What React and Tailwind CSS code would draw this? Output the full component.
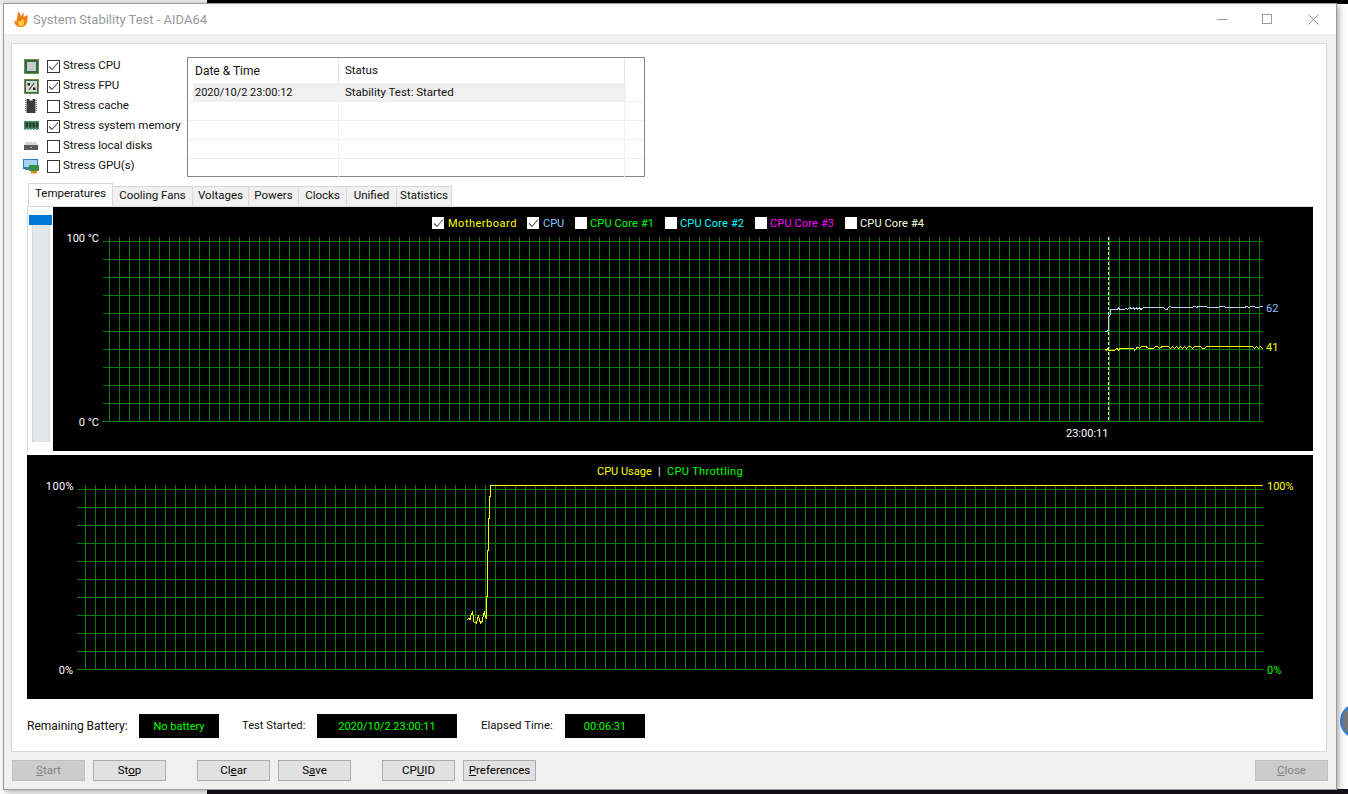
const zoomed = (points, ox, oy, scale = 3) =>
  points.map(([x, y]) => `${ox + x / scale},${oy + y / scale}`).join(' ')

const CPU_TRACE = [[195,333],[203,333],[206,328],[207,290],[210,285],[211,268],[232,268],[236,263],[240,268],[254,268],[258,264],[263,268],[268,262],[275,266],[280,264],[285,268],[288,263],[293,268],[298,263],[303,268],[312,262],[370,262],[376,268],[382,268],[388,259],[395,262],[458,262],[463,259],[470,262],[478,259],[498,260],[503,262],[536,262],[540,259],[552,260],[556,262],[615,262],[620,259],[627,262],[637,259],[650,262],[668,260]]
const BOARD_TRACE = [[195,388],[199,391],[203,386],[207,392],[225,391],[230,385],[236,391],[240,385],[280,385],[284,391],[292,382],[298,385],[304,380],[318,380],[326,385],[340,385],[346,380],[352,380],[358,385],[366,380],[386,380],[392,385],[397,380],[403,385],[409,380],[415,385],[421,380],[427,385],[433,380],[439,385],[445,380],[451,380],[458,385],[464,380],[482,380],[488,385],[495,385],[499,380],[638,380],[644,385],[650,380],[656,385],[662,380],[668,385]]
const USAGE_TRACE = [[81,478],[87,475],[90,481],[93,464],[97,458],[99,466],[102,487],[110,490],[112,476],[115,469],[119,478],[121,490],[127,484],[130,465],[133,458],[136,470],[139,476],[139,408],[142,408],[142,272],[145,272],[145,175],[148,175],[148,108],[151,108],[151,76]]

const range = (start, end, step) => {
  const out = []
  for (let v = start; v <= end; v += step) out.push(v)
  return out
}

function Grid({ left, right, top, rowTop, bottom, firstCol, lastCol }) {
  return (
    <g stroke="#0a7a0a" strokeWidth="1" shapeRendering="crispEdges">
      {range(firstCol, lastCol, 10).map(x => <line key={x} x1={x + 0.5} x2={x + 0.5} y1={top} y2={bottom} />)}
      {range(rowTop, bottom, 18).map(y => <line key={y} x1={left} x2={right} y1={y + 0.5} y2={y + 0.5} />)}
    </g>
  )
}

function ChartLabel({ x, y, fill, anchor = 'start', spacing, children }) {
  return <text x={x} y={y} fill={fill} textAnchor={anchor} letterSpacing={spacing} fontSize="11" fontFamily="Roboto, sans-serif">{children}</text>
}

function TempChart() {
  return (
    <svg className="block w-full h-full" viewBox="53 207 1260 244">
      <Grid left={103} right={1263} top={237} rowTop={241} bottom={421} firstCol={109} lastCol={1259} />
      <line x1="1108.5" x2="1108.5" y1="237" y2="421" stroke="#fff" strokeDasharray="3 2" shapeRendering="crispEdges" />
      <polyline points={zoomed(CPU_TRACE, 1040, 220)} fill="none" stroke="#b9d3f2" strokeWidth="1" shapeRendering="crispEdges" />
      <polyline points={zoomed(BOARD_TRACE, 1040, 220)} fill="none" stroke="#ffff00" strokeWidth="1" shapeRendering="crispEdges" />
      <ChartLabel x={99} y={242} fill="#fff" anchor="end">100 °C</ChartLabel>
      <ChartLabel x={99} y={426} fill="#fff" anchor="end">0 °C</ChartLabel>
      <ChartLabel x={1266} y={312} fill="#8fc0ff">62</ChartLabel>
      <ChartLabel x={1266} y={351} fill="#ffff00">41</ChartLabel>
      <ChartLabel x={1066} y={437} fill="#fff">23:00:11</ChartLabel>
    </svg>
  )
}

function UsageChart() {
  return (
    <svg className="block w-full h-full" viewBox="27 455 1286 244">
      <Grid left={77} right={1263} top={485} rowTop={489} bottom={669} firstCol={85} lastCol={1255} />
      <polyline points={`${zoomed(USAGE_TRACE, 440, 460)} 1263,485.5`} fill="none" stroke="#ffff00" strokeWidth="1" shapeRendering="crispEdges" />
      <ChartLabel x={597} y={475} fill="#ffff00">CPU Usage</ChartLabel>
      <ChartLabel x={658} y={475} fill="#fff">|</ChartLabel>
      <ChartLabel x={667} y={475} fill="#00ff00" spacing="0.35">CPU Throttling</ChartLabel>
      <ChartLabel x={74} y={490} fill="#fff" anchor="end" spacing="0.4">100%</ChartLabel>
      <ChartLabel x={73} y={674} fill="#fff" anchor="end">0%</ChartLabel>
      <ChartLabel x={1267} y={490} fill="#ffff00">100%</ChartLabel>
      <ChartLabel x={1267} y={674} fill="#00ff00">0%</ChartLabel>
    </svg>
  )
}

function Check({ checked, size = 'w-[13px] h-[13px]', className = 'border border-[#333]' }) {
  return (
    <span className={`${size} ${className} shrink-0 bg-white flex items-center justify-center`}>
      {checked && (
        <svg width="11" height="11" viewBox="0 0 11 11">
          <path d="M1 5.5 L4 8.5 L10 1.5" fill="none" stroke="#555" strokeWidth="1.1" />
        </svg>
      )}
    </span>
  )
}

// gold contact dots round the edge of a chip
const Pins = () => (
  <rect x="0.5" y="0.5" width="14" height="14" fill="none" stroke="#c9a24a" strokeWidth="1" strokeDasharray="1 1" />
)
const CpuIcon = () => (
  <svg width="15" height="15" viewBox="0 0 15 15">
    <rect width="15" height="15" fill="#2e6b45" />
    <Pins />
    <rect x="3" y="3" width="9" height="9" fill="#c7cbc8" />
  </svg>
)
const FpuIcon = () => (
  <svg width="15" height="15" viewBox="0 0 15 15">
    <rect width="15" height="15" fill="#2e6b45" />
    <Pins />
    <rect x="2" y="2" width="11" height="11" fill="#d4d8d5" />
    <path d="M5 11 L10 4" stroke="#222" strokeWidth="1" />
    <rect x="3.5" y="4" width="2.5" height="2.5" fill="#222" />
    <rect x="9" y="8.5" width="2.5" height="2.5" fill="#222" />
  </svg>
)
const CacheIcon = () => (
  <svg width="12" height="14" viewBox="0 0 12 14">
    <path d="M1.5 0 H4.5 V1.5 H7.5 V0 H10.5 V14 H1.5 Z" fill="#3c3c3c" />
    <path d="M0.5 1 V13 M11.5 1 V13" stroke="#888" strokeWidth="1" strokeDasharray="1 1" />
  </svg>
)
const MemoryIcon = () => (
  <svg width="15" height="10" viewBox="0 0 15 10">
    <rect width="15" height="8" fill="#3f9060" />
    <rect x="1.5" y="1.5" width="2.5" height="5" fill="#2a3a30" />
    <rect x="5" y="1.5" width="2.5" height="5" fill="#2a3a30" />
    <rect x="8.5" y="1.5" width="2.5" height="5" fill="#2a3a30" />
    <rect x="12" y="1.5" width="2" height="5" fill="#2a3a30" />
    <path d="M0 8.5 H15" stroke="#7fb394" strokeDasharray="2 1" />
  </svg>
)
const DiskIcon = () => (
  <svg width="14" height="8" viewBox="0 0 14 8">
    <path d="M2 0 H12 L14 3 H0 Z" fill="#d6d6d6" />
    <rect y="3" width="14" height="5" fill="#5a5a5a" />
    <rect x="6" y="5" width="2" height="1" fill="#6fe06f" />
  </svg>
)
const GpuIcon = () => (
  <svg width="16" height="15" viewBox="0 0 16 15">
    <rect width="15" height="10" fill="#2f7fc4" />
    <rect x="1" y="1" width="13" height="7" fill="#a5d4ef" />
    <rect x="6" y="6" width="10" height="6" fill="#3d8a4a" />
    <rect x="8" y="12" width="6" height="2.5" fill="#d98a1f" />
    <rect x="2" y="10" width="4" height="1" fill="#777" />
  </svg>
)

const STRESS = [
  { label: 'Stress CPU', icon: CpuIcon, checked: true },
  { label: 'Stress FPU', icon: FpuIcon, checked: true },
  { label: 'Stress cache', icon: CacheIcon, checked: false },
  { label: 'Stress system memory', icon: MemoryIcon, checked: true },
  { label: 'Stress local disks', icon: DiskIcon, checked: false },
  { label: 'Stress GPU(s)', icon: GpuIcon, checked: false },
]

const TABS = [
  ['Cooling Fans', 'w-[80px]'],
  ['Voltages', 'w-[56px]'],
  ['Powers', 'w-[50px]'],
  ['Clocks', 'w-[48px]'],
  ['Unified', 'w-[50px]'],
  ['Statistics', 'w-[55px]'],
]

const LEGEND = [
  { label: 'Motherboard', color: 'text-[#ffff00] tracking-[0.5px] ml-[4px]', width: 'w-[95px]', checked: true },
  { label: 'CPU', color: 'text-[#8fc0ff] ml-[4px]', width: 'w-[48px]', checked: true },
  { label: 'CPU Core #1', color: 'text-[#00ff00] tracking-[0.15px] ml-[3px]', width: 'w-[90px]' },
  { label: 'CPU Core #2', color: 'text-[#00ffff] tracking-[0.15px] ml-[3px]', width: 'w-[90px]' },
  { label: 'CPU Core #3', color: 'text-[#ff00ff] tracking-[0.15px] ml-[3px]', width: 'w-[90px]' },
  { label: 'CPU Core #4', color: 'text-[#ffffe0] tracking-[0.15px] ml-[3px]', width: 'w-[90px]' },
]

function StatusBox({ width, children }) {
  return (
    <div className={`${width} h-6 bg-black text-[#00ff00] text-[11px] flex items-center justify-center`}>{children}</div>
  )
}

// label is split around the underlined access key
function Btn({ pre, mark, post, disabled, className = '' }) {
  return (
    <button
      className={`w-[73px] h-[21px] border flex items-center justify-center whitespace-pre pt-px ${
        disabled ? 'bg-[#cccccc] border-[#bfbfbf] text-[#838383]' : 'bg-[#e1e1e1] border-[#adadad] text-black'
      } ${className}`}
    >
      {pre}<span className="underline">{mark}</span>{post}
    </button>
  )
}

export default function App() {
  return (
    <div className="relative w-[1348px] h-[794px] overflow-hidden bg-white font-['Roboto',sans-serif] text-[11.5px] leading-none text-[#111]">
      {/* desktop behind the window */}
      <div className="absolute left-0 top-0 w-[207px] h-[4px] bg-[#e8e8e8]" />
      <div className="absolute left-[207px] top-0 right-0 h-[4px] bg-black" />
      <div className="absolute left-[207px] bottom-0 right-0 h-[5px] bg-[#14101a]" />
      <div className="absolute left-[1340px] top-[703px] w-[36px] h-[36px] rounded-full bg-[#777] border-2 border-[#2a84e8]" />

      <div className="absolute left-[3px] top-[3px] w-[1334px] h-[787px] flex flex-col bg-[#f0f0f0] border border-[#9a9a9a] shadow-[2px_2px_6px_rgba(0,0,0,0.35)]">
        {/* title bar */}
        <div className="h-[30px] shrink-0 bg-white flex items-center pl-[10px] text-[#999] text-[13px]">
          <svg width="14" height="16" viewBox="0 0 14 16" className="mr-[5px]">
            <path d="M7 16 C2 16 0 13 0.5 9 L2.5 11 C2.5 7 4 3 4.5 0 L7 5 L10 1.5 L9.5 6 L13.5 4 C14 10 13 16 7 16 Z" fill="#ef7d14" />
            <path d="M7 15 C4.5 15 3.5 12.5 5 9.5 L6.5 11 L8.5 7.5 C11 11 10.5 15 7 15 Z" fill="#ffd23f" />
          </svg>
          <span>System Stability Test - AIDA64</span>
          <div className="ml-auto flex items-center">
            <span className="w-[10px] h-px bg-[#999] mr-[35px]" />
            <span className="w-[10px] h-[10px] border border-[#999] mr-[36px]" />
            <svg width="11" height="11" viewBox="0 0 11 11" className="mr-[17px]">
              <path d="M0.5 0.5 L10.5 10.5 M10.5 0.5 L0.5 10.5" stroke="#999" fill="none" />
            </svg>
          </div>
        </div>

        {/* main panel */}
        <div className="mt-[9px] ml-[7px] mr-[9px] h-[709px] shrink-0 bg-white border border-[#d9d9d9] pt-[11px]">
          <div className="flex h-[122px] pl-[11px]">
            <div className="w-[164px] shrink-0 pt-px">
              {STRESS.map(({ label, icon: Icon, checked }) => (
                <div key={label} className="h-5 flex items-center">
                  <span className="w-[16px] flex justify-center"><Icon /></span>
                  <span className="w-[8px]" />
                  <Check checked={checked} />
                  <span className="ml-[3px] whitespace-nowrap">{label}</span>
                </div>
              ))}
            </div>
            {/* log table */}
            <div className="mt-[2px] w-[458px] h-[120px] border border-[#828790] flex flex-col">
              <div className="h-[25px] shrink-0 flex items-center">
                <span className="w-[151px] pl-[7px] h-full flex items-center border-r border-[#e5e5e5] text-[12px]">Date &amp; Time</span>
                <span className="w-[286px] pl-[6px] h-full flex items-center border-r border-[#e5e5e5]">Status</span>
              </div>
              <div className="h-[19px] shrink-0 flex items-center border-b border-[#f0f0f0]">
                <span className="ml-[5px] w-[433px] h-full bg-[#f0f0f0] flex items-center pt-px">
                  <span className="w-[146px] pl-[2px] text-[11px]">2020/10/2 23:00:12</span>
                  <span className="pl-[6px]">Stability Test: Started</span>
                </span>
              </div>
              {[0, 1, 2, 3].map(i => (
                <div key={i} className="h-[19px] shrink-0 flex border-b border-[#f0f0f0] last:border-b-0">
                  <span className="w-[151px] border-r border-[#f0f0f0]" />
                  <span className="w-[286px] border-r border-[#f0f0f0]" />
                </div>
              ))}
            </div>
          </div>

          {/* tabs */}
          <div className="mt-[7px] ml-[15px] w-[1286px] h-[23px] flex items-end pl-px border-b border-[#d9d9d9]">
            <div className="w-[85px] h-[23px] bg-white border border-b-0 border-[#d9d9d9] flex items-center justify-center pb-[2px]">Temperatures</div>
            {TABS.map(([label, width]) => (
              <div key={label} className={`${width} h-[20px] bg-[#f0f0f0] border border-l-0 border-b-0 border-[#d9d9d9] flex items-center justify-center pb-px`}>{label}</div>
            ))}
          </div>

          {/* charts */}
          <div className="ml-[15px] w-[1286px] h-[244px] flex">
            <div className="w-[26px] shrink-0 border-l border-[#d9d9d9] pl-px pt-[8px]">
              <div className="w-[23px] h-[10px] bg-[#0078d7]" />
              <div className="ml-[3px] w-[18px] h-[217px] bg-[#e4e7e9] border-x border-[#d4d6d8]" />
            </div>
            <div className="relative flex-1 bg-black">
              <TempChart />
              <div className="absolute left-[379px] top-[10px] flex items-center">
                {LEGEND.map(({ label, color, width, checked }) => (
                  <div key={label} className={`${width} flex items-center`}>
                    <Check checked={checked} size="w-[12px] h-[12px]" className="" />
                    <span className={`whitespace-nowrap text-[11px] ${color}`}>{label}</span>
                  </div>
                ))}
              </div>
            </div>
          </div>
          <div className="mt-[4px] ml-[15px] w-[1286px] h-[244px] bg-black">
            <UsageChart />
          </div>

          {/* battery / timers */}
          <div className="mt-[15px] ml-[15px] flex items-center">
            <span className="w-[112px] text-[12px]">Remaining Battery:</span>
            <StatusBox width="w-[80px]">No battery</StatusBox>
            <span className="ml-[23px] w-[75px] text-[11.2px]">Test Started:</span>
            <StatusBox width="w-[140px]">2020/10/2 23:00:11</StatusBox>
            <span className="ml-[24px] w-[84px]">Elapsed Time:</span>
            <StatusBox width="w-[80px]">00:06:31</StatusBox>
          </div>
        </div>

        {/* command buttons */}
        <div className="mt-[8px] mx-[8px] flex">
          <Btn pre="" mark="S" post="tart" disabled />
          <Btn pre="St" mark="o" post="p" className="ml-[8px]" />
          <Btn pre="Cl" mark="e" post="ar" className="ml-[31px]" />
          <Btn pre="S" mark="a" post="ve" className="ml-[8px]" />
          <Btn pre="CP" mark="U" post="ID" className="ml-[31px]" />
          <Btn pre="" mark="P" post="references" className="ml-[8px]" />
          <Btn pre="" mark="C" post="lose" disabled className="ml-auto" />
        </div>
      </div>
    </div>
  )
}
